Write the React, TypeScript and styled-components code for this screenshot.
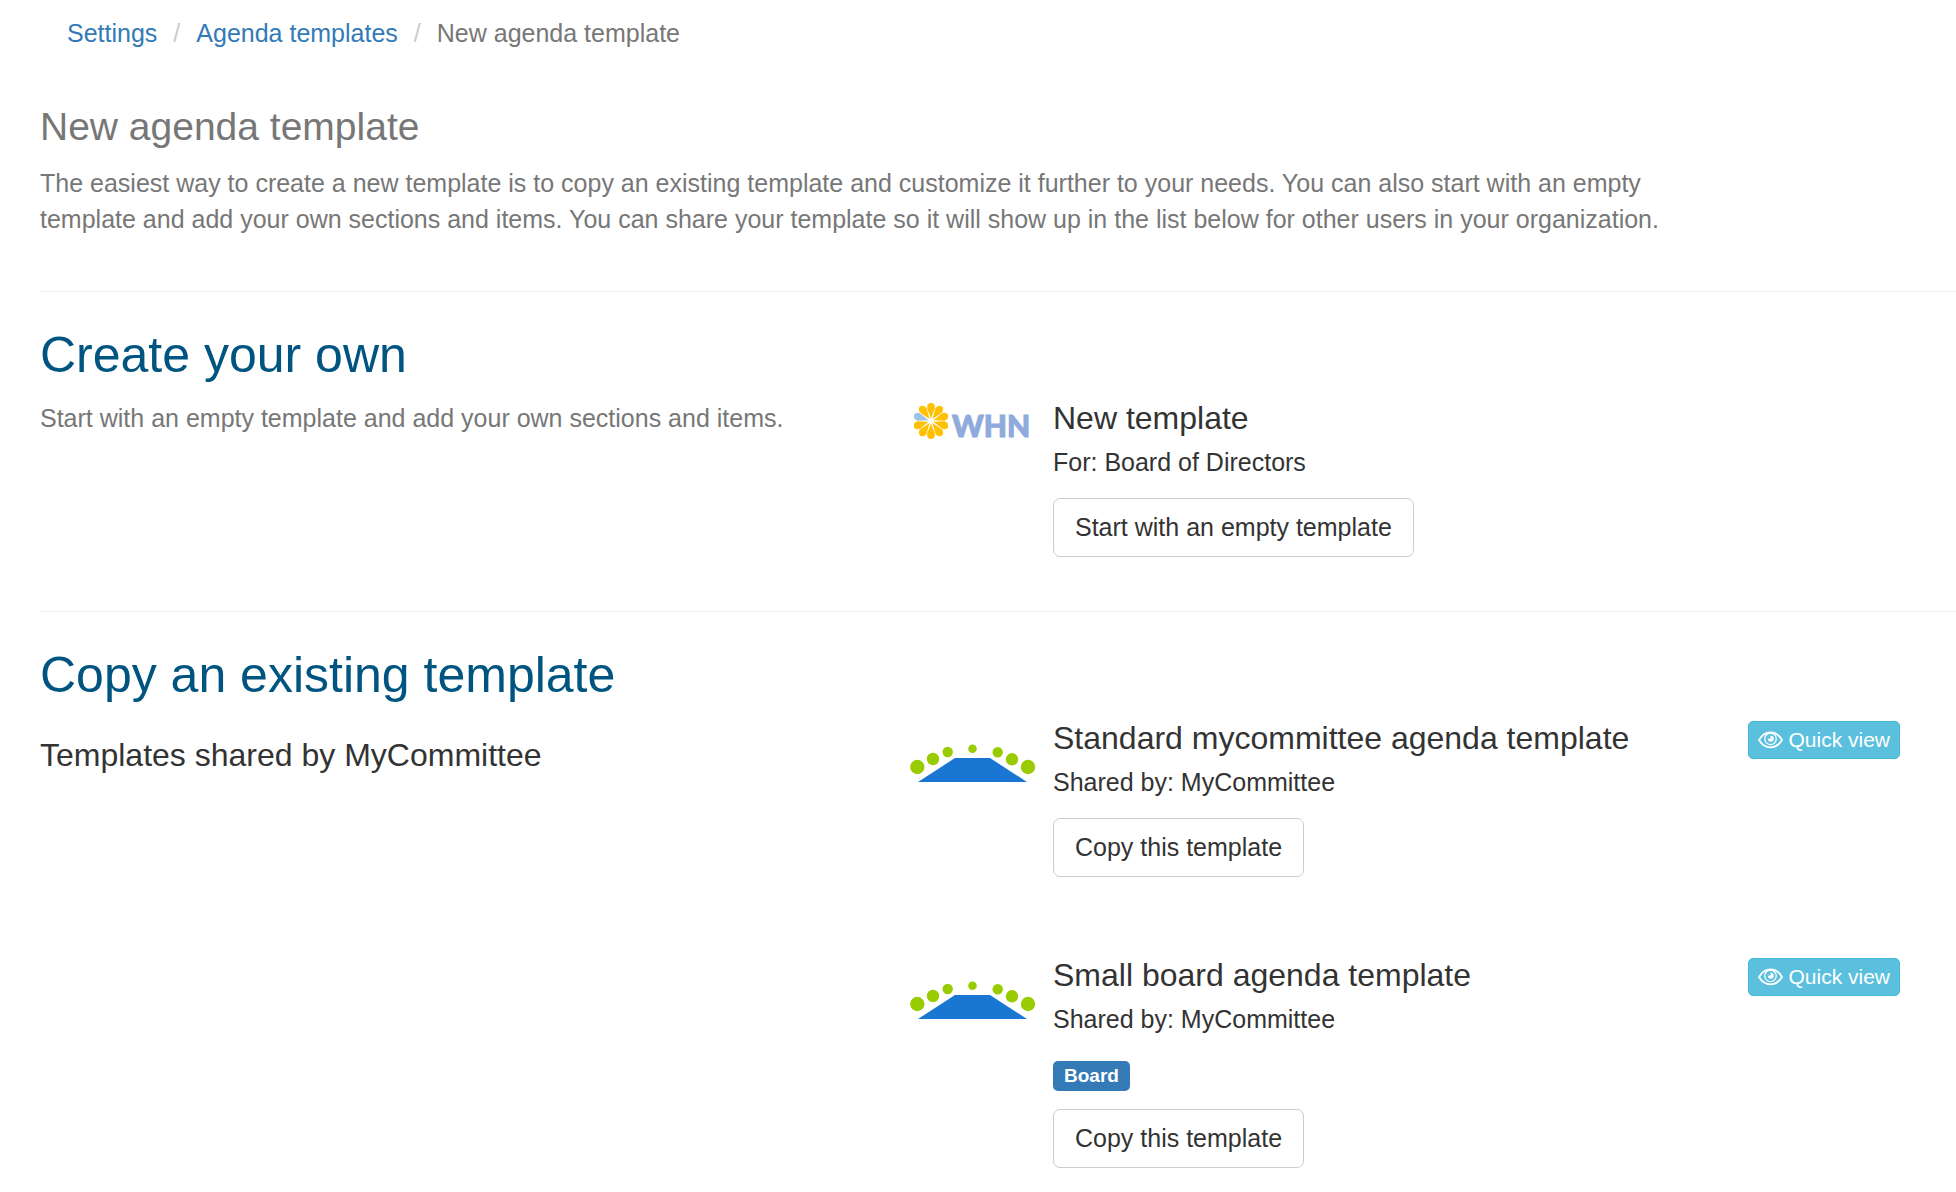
import React from "react";
import styled, { createGlobalStyle } from "styled-components";

const GlobalStyle = createGlobalStyle`
  *, *::before, *::after { box-sizing: border-box; }
  body {
    margin: 0;
    background: #fff;
    color: #333;
    font-family: "Liberation Sans", Arial, Helvetica, sans-serif;
    font-size: 25px;
    line-height: 36px;
  }
`;

const Page = styled.div`
  padding-left: 40px;
`;

const Crumbs = styled.ol`
  display: flex;
  flex-wrap: wrap;
  margin: 0;
  padding: 15px 27px 0;
  list-style: none;
  color: #777;
`;

const Crumb = styled.li`
  & + &::before {
    content: "/";
    padding: 0 16px;
    color: #ccc;
  }
`;

const CrumbLink = styled.a`
  color: #337ab7;
  text-decoration: none;
  &:hover { text-decoration: underline; }
`;

const Intro = styled.header`
  padding: 54px 0;
  color: #777;
`;

const PageTitle = styled.h1`
  margin: 0 0 16px;
  font-size: 39px;
  line-height: 44px;
  font-weight: 400;
`;

const Lead = styled.p`
  width: 87%;
  margin: 0;
`;

const Section = styled.section`
  padding: 35px 56px 54px 0;
  border-top: 1px solid #eee;
`;

const SectionTitle = styled.h2`
  margin: 0 0 10px;
  font-size: 50px;
  line-height: 56px;
  font-weight: 400;
  color: #005580;
`;

const Columns = styled.div`
  display: grid;
  grid-template-columns: minmax(0, 7fr) minmax(0, 8fr);
`;

const Note = styled.p`
  margin: 0;
  padding-top: 7px;
  color: #777;
`;

const GroupTitle = styled.h3`
  margin: 0;
  padding-top: 24px;
  font-size: 32px;
  line-height: 36px;
  font-weight: 400;
`;

const TemplateList = styled.ul`
  display: grid;
  gap: 80px;
  margin: 0;
  padding: 7px 0 0;
  list-style: none;
`;

const TemplateItem = styled.li`
  display: grid;
  grid-template-columns: 145px minmax(0, 1fr) auto;
  align-items: start;
`;

const TemplateName = styled.h4`
  margin: 0 0 8px;
  font-size: 32px;
  line-height: 36px;
  font-weight: 400;
`;

const Owner = styled.p`
  margin: 0;
`;

const Tags = styled.div`
  display: flex;
  gap: 8px;
  padding-top: 24px;
`;

const Tag = styled.span`
  padding: 0 11px;
  border-radius: 5px;
  background: #337ab7;
  color: #fff;
  font-size: 19px;
  line-height: 30px;
  font-weight: 700;
`;

const ActionButton = styled.button`
  display: block;
  margin-top: 18px;
  padding: 10px 21px 11px;
  border: 1px solid #ccc;
  border-radius: 7px;
  background: #fff;
  color: #333;
  font: inherit;
  cursor: pointer;
  &:hover { background: #e6e6e6; }
`;

const QuickButton = styled.button`
  display: flex;
  align-items: center;
  gap: 5px;
  margin-top: 1px;
  padding: 2px 9px;
  border: 1px solid #46b8da;
  border-radius: 5px;
  background: #5bc0de;
  color: #fff;
  font-family: inherit;
  font-size: 21px;
  line-height: 32px;
  cursor: pointer;
  &:hover { background: #31b0d5; }
`;

const Brand = styled.div`
  display: flex;
  align-items: flex-start;
  gap: 4px;
  padding: 3px 0 0 6px;
`;

const BrandName = styled.span`
  padding-top: 4px;
  color: #8faadc;
  font-family: Lato, "Open Sans", sans-serif;
  font-size: 30px;
  line-height: 36px;
  font-weight: 900;
  -webkit-text-stroke: 1px #8faadc;
`;

const CommitteeArt = styled.svg`
  display: block;
  margin-top: 23px;
`;

const PETALS = [0, 1, 2, 3, 4, 5, 6, 7, 8, 9];

const WhnLogo = () => (
  <Brand>
    <svg width="34" height="36" viewBox="-17 -18 34 36" aria-hidden="true">
      {PETALS.map((n) => (
        <path
          key={n}
          d="M0 -2.5 L-3.8 -12.6 A3.9 4.5 0 1 1 3.8 -12.6 Z"
          fill={n === 8 ? "#9dc3e6" : "#ffc000"}
          transform={`rotate(${n * 36})`}
        />
      ))}
    </svg>
    <BrandName>WHN</BrandName>
  </Brand>
);

const CommitteeLogo = () => (
  <CommitteeArt width="128" height="42" viewBox="8 13 128 42" role="img" aria-label="MyCommittee">
    <path d="M55 28 H90 L127 52 H18 Z" fill="#1976d2" />
    <g fill="#99cc00">
      <circle cx="17.3" cy="37" r="7.2" />
      <circle cx="33" cy="29" r="6.2" />
      <circle cx="47.7" cy="22" r="5.2" />
      <circle cx="72.5" cy="18.8" r="4.3" />
      <circle cx="97.7" cy="22.3" r="5.2" />
      <circle cx="112" cy="29.3" r="6.2" />
      <circle cx="128" cy="37" r="7.2" />
    </g>
  </CommitteeArt>
);

const EyeIcon = () => (
  <svg width="25" height="18" viewBox="0 0 25 18" fill="none" stroke="#fff" aria-hidden="true">
    <path d="M1 9 C4 3.7 8 1.3 12.5 1.3 S21 3.7 24 9 C21 14 17 16.3 12.5 16.3 S4 14 1 9 Z" strokeWidth="1.8" />
    <circle cx="12.5" cy="7.8" r="5.8" strokeWidth="1.3" />
    <circle cx="12.8" cy="7.8" r="3" fill="#fff" stroke="none" />
    <circle cx="11.2" cy="6.2" r="1.5" fill="#5bc0de" stroke="none" />
  </svg>
);

type Template = {
  name: string;
  owner: string;
  action: string;
  tags?: string[];
  preview?: boolean;
  logo: React.ReactNode;
};

const ownTemplates: Template[] = [
  {
    name: "New template",
    owner: "For: Board of Directors",
    action: "Start with an empty template",
    logo: <WhnLogo />,
  },
];

const sharedTemplates: Template[] = [
  {
    name: "Standard mycommittee agenda template",
    owner: "Shared by: MyCommittee",
    action: "Copy this template",
    preview: true,
    logo: <CommitteeLogo />,
  },
  {
    name: "Small board agenda template",
    owner: "Shared by: MyCommittee",
    action: "Copy this template",
    tags: ["Board"],
    preview: true,
    logo: <CommitteeLogo />,
  },
];

const Templates = ({ items }: { items: Template[] }) => (
  <TemplateList>
    {items.map((item) => (
      <TemplateItem key={item.name}>
        {item.logo}
        <div>
          <TemplateName>{item.name}</TemplateName>
          <Owner>{item.owner}</Owner>
          {item.tags && (
            <Tags>
              {item.tags.map((tag) => (
                <Tag key={tag}>{tag}</Tag>
              ))}
            </Tags>
          )}
          <ActionButton type="button">{item.action}</ActionButton>
        </div>
        {item.preview && (
          <QuickButton type="button">
            <EyeIcon />
            Quick view
          </QuickButton>
        )}
      </TemplateItem>
    ))}
  </TemplateList>
);

export default function App() {
  return (
    <>
      <GlobalStyle />
      <Page>
        <nav aria-label="Breadcrumb">
          <Crumbs>
            <Crumb><CrumbLink href="#settings">Settings</CrumbLink></Crumb>
            <Crumb><CrumbLink href="#agenda-templates">Agenda templates</CrumbLink></Crumb>
            <Crumb aria-current="page">New agenda template</Crumb>
          </Crumbs>
        </nav>
        <main>
          <Intro>
            <PageTitle>New agenda template</PageTitle>
            <Lead>
              The easiest way to create a new template is to copy an existing template and customize it
              further to your needs. You can also start with an empty template and add your own sections
              and items. You can share your template so it will show up in the list below for other users
              in your organization.
            </Lead>
          </Intro>
          <Section>
            <SectionTitle>Create your own</SectionTitle>
            <Columns>
              <Note>Start with an empty template and add your own sections and items.</Note>
              <Templates items={ownTemplates} />
            </Columns>
          </Section>
          <Section>
            <SectionTitle>Copy an existing template</SectionTitle>
            <Columns>
              <GroupTitle>Templates shared by MyCommittee</GroupTitle>
              <Templates items={sharedTemplates} />
            </Columns>
          </Section>
        </main>
      </Page>
    </>
  );
}
